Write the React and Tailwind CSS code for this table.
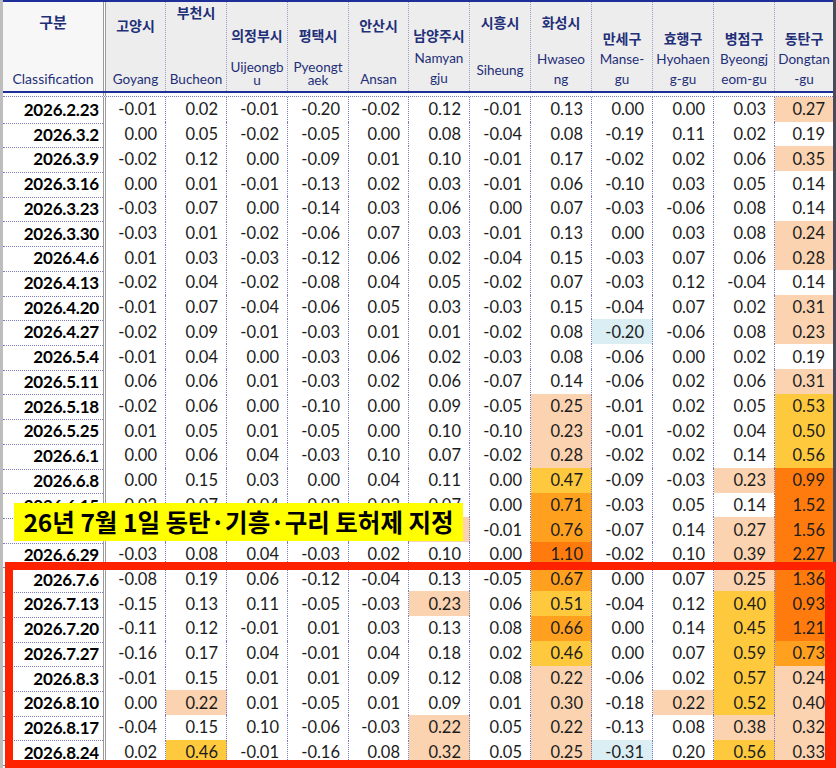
import React from 'react'

const grid = 'grid grid-cols-[100px_3px_60px_61px_61px_61px_60px_61px_61px_61px_61px_61px_61px_58px]'

const heads = [
  { ko: '고양시', en: ['Goyang'], k: 'mt-[14px]', e: ['mt-[37px]'], lead: 'leading-[16px]' },
  { ko: '부천시', en: ['Bucheon'], k: 'mt-[1px]', e: ['mt-[50px]'], lead: 'leading-[16px]' },
  { ko: '의정부시', en: ['Uijeongb', 'u'], k: 'mt-[24px]', e: ['mt-[17px]', 'mt-0'], lead: 'leading-[13px]' },
  { ko: '평택시', en: ['Pyeongt', 'aek'], k: 'mt-[24px]', e: ['mt-[17px]', 'mt-0'], lead: 'leading-[13px]' },
  { ko: '안산시', en: ['Ansan'], k: 'mt-[14px]', e: ['mt-[37px]'], lead: 'leading-[16px]' },
  { ko: '남양주시', en: ['Namyan', 'gju'], k: 'mt-[24px]', e: ['mt-[6px]', 'mt-[4px]'], lead: 'leading-[16px]' },
  { ko: '시흥시', en: ['Siheung'], k: 'mt-[11px]', e: ['mt-[31px]'], lead: 'leading-[16px]' },
  { ko: '화성시', en: ['Hwaseo', 'ng'], k: 'mt-[11px]', e: ['mt-[20px]', 'mt-[4px]'], lead: 'leading-[16px]' },
  { ko: '만세구', en: ['Manse-', 'gu'], k: 'mt-[27px]', e: ['mt-[4px]', 'mt-[4px]'], lead: 'leading-[16px]' },
  { ko: '효행구', en: ['Hyohaen', 'g-gu'], k: 'mt-[27px]', e: ['mt-[4px]', 'mt-[4px]'], lead: 'leading-[16px]' },
  { ko: '병점구', en: ['Byeongj', 'eom-gu'], k: 'mt-[27px]', e: ['mt-[4px]', 'mt-[4px]'], lead: 'leading-[16px]' },
  { ko: '동탄구', en: ['Dongtan', '-gu'], k: 'mt-[27px]', e: ['mt-[4px]', 'mt-[4px]'], lead: 'leading-[16px]' },
]

// ~p = forced peach, ~b = light blue
const rows = [
  ['2026.2.23', '-0.01 0.02 -0.01 -0.20 -0.02 0.12 -0.01 0.13 0.00 0.00 0.03 0.27'],
  ['2026.3.2', '0.00 0.05 -0.02 -0.05 0.00 0.08 -0.04 0.08 -0.19 0.11 0.02 0.19'],
  ['2026.3.9', '-0.02 0.12 0.00 -0.09 0.01 0.10 -0.01 0.17 -0.02 0.02 0.06 0.35'],
  ['2026.3.16', '0.00 0.01 -0.01 -0.13 0.02 0.03 -0.01 0.06 -0.10 0.03 0.05 0.14'],
  ['2026.3.23', '-0.03 0.07 0.00 -0.14 0.03 0.06 0.00 0.07 -0.03 -0.06 0.08 0.14'],
  ['2026.3.30', '-0.03 0.01 -0.02 -0.06 0.07 0.03 -0.01 0.13 0.00 0.03 0.08 0.24'],
  ['2026.4.6', '0.01 0.03 -0.03 -0.12 0.06 0.02 -0.04 0.15 -0.03 0.07 0.06 0.28'],
  ['2026.4.13', '-0.02 0.04 -0.02 -0.08 0.04 0.05 -0.02 0.07 -0.03 0.12 -0.04 0.14'],
  ['2026.4.20', '-0.01 0.07 -0.04 -0.06 0.05 0.03 -0.03 0.15 -0.04 0.07 0.02 0.31'],
  ['2026.4.27', '-0.02 0.09 -0.01 -0.03 0.01 0.01 -0.02 0.08 -0.20~b -0.06 0.08 0.23'],
  ['2026.5.4', '-0.01 0.04 0.00 -0.03 0.06 0.02 -0.03 0.08 -0.06 0.00 0.02 0.19'],
  ['2026.5.11', '0.06 0.06 0.01 -0.03 0.02 0.06 -0.07 0.14 -0.06 0.02 0.06 0.31'],
  ['2026.5.18', '-0.02 0.06 0.00 -0.10 0.00 0.09 -0.05 0.25 -0.01 0.02 0.05 0.53'],
  ['2026.5.25', '0.01 0.05 0.01 -0.05 0.00 0.10 -0.10 0.23 -0.01 -0.02 0.04 0.50'],
  ['2026.6.1', '0.00 0.06 0.04 -0.03 0.10 0.07 -0.02 0.28 -0.02 0.02 0.14 0.56'],
  ['2026.6.8', '0.00 0.15 0.03 0.00 0.04 0.11 0.00 0.47 -0.09 -0.03 0.23 0.99'],
  ['2026.6.15', '0.02 0.07 0.04 0.02 0.03 0.07 0.00 0.71 -0.03 0.05 0.14 1.52'],
  ['2026.6.22', '0.01 0.05 0.02 0.00 0.04 0.21 -0.01 0.76 -0.07 0.14 0.27 1.56'],
  ['2026.6.29', '-0.03 0.08 0.04 -0.03 0.02 0.10 0.00 1.10 -0.02 0.10 0.39 2.27'],
  ['2026.7.6', '-0.08 0.19 0.06 -0.12 -0.04 0.13 -0.05 0.67 0.00 0.07 0.25 1.36'],
  ['2026.7.13', '-0.15 0.13 0.11 -0.05 -0.03 0.23 0.06 0.51 -0.04 0.12 0.40 0.93'],
  ['2026.7.20', '-0.11 0.12 -0.01 0.01 0.03 0.13 0.08 0.66 0.00 0.14 0.45 1.21'],
  ['2026.7.27', '-0.16 0.17 0.04 -0.01 0.04 0.18 0.02 0.46 0.00 0.07 0.59 0.73'],
  ['2026.8.3', '-0.01 0.15 0.01 0.01 0.09 0.12 0.08 0.22 -0.06 0.02 0.57 0.24'],
  ['2026.8.10', '0.00 0.22 0.01 -0.05 0.01 0.09 0.01 0.30 -0.18 0.22 0.52 0.40~p'],
  ['2026.8.17', '-0.04 0.15 0.10 -0.06 -0.03 0.22 0.05 0.22 -0.13 0.08 0.38 0.32'],
  ['2026.8.24', '0.02 0.46 -0.01 -0.16 0.08 0.32 0.05 0.25 -0.31~b 0.20 0.56 0.33'],
]

const tone = (raw) => {
  const [s, flag] = raw.split('~')
  const v = parseFloat(s)
  if (flag === 'b') return 'bg-[#dbeef4]'
  if (flag === 'p') return 'bg-[#fbd3b1]'
  if (v >= 0.9) return 'bg-[#ff7b0d]'
  if (v >= 0.6) return 'bg-[#ffa01f]'
  if (v >= 0.4) return 'bg-[#ffc93d]'
  if (v > 0.205) return 'bg-[#fbd3b1]'
  return 'bg-white'
}

const Header = () => (
  <div className={grid + ' h-[93px] border-y-2 border-[#1f2f9a]'}>
    <div className='flex flex-col items-center bg-[#f7f7f7] text-[#1f2f78]'>
      <div className='mt-[11px] leading-[18px] text-[15px] font-bold font-["Noto_Sans_CJK_KR",sans-serif]'>구분</div>
      <div className='mt-[40px] leading-[16px] text-[14px]'>Classification</div>
    </div>
    <div className='border-x border-[#9a9a9a] bg-white'></div>
    {heads.map((h, i) => (
      <div key={h.ko} className={'flex flex-col items-center bg-[#ededed] text-[#1f2f78] border-dotted border-[#9c9cc8] ' + (i < heads.length - 1 ? 'border-r' : '')}>
        <div className={h.k + ' leading-[18px] text-[14px] font-bold font-["Noto_Sans_CJK_KR",sans-serif] whitespace-nowrap'}>{h.ko}</div>
        {h.en.map((t, j) => (
          <div key={t} className={h.e[j] + ' ' + h.lead + ' text-[13.5px] whitespace-nowrap'}>{t}</div>
        ))}
      </div>
    ))}
  </div>
)

const Row = ({ date, vals }) => {
  const list = vals.split(' ')
  return (
    <div className={grid + ' h-[24.72px]'}>
      <div className='flex items-center justify-end pr-[4px] border-b border-dotted border-[#7b7bc0] font-bold text-[17px] tracking-[-0.2px] text-black'>{date}</div>
      <div className='border-x border-[#9a9a9a] bg-white'></div>
      {list.map((raw, i) => (
        <div key={i} className={'flex items-center justify-end pr-[8px] border-b border-dotted border-[#7b7bc0] text-[16.5px] text-[#1c1c1c] ' + tone(raw) + (i < list.length - 1 ? ' border-r' : '')}>
          {raw.split('~')[0]}
        </div>
      ))}
    </div>
  )
}

export default function App() {
  return (
    <div className='relative w-[836px] h-[768px] overflow-hidden bg-white font-["Lato","Liberation_Sans",sans-serif]'>
      <div className='flex h-full'>
        <div className='w-[3px] bg-[#bdbdbd]'></div>
        <div className='w-[830px] flex flex-col'>
          <Header />
          <div className={grid + ' h-[4px] border-b border-dotted border-[#7b7bc0]'}>
            <div></div>
            <div className='border-x border-[#9a9a9a]'></div>
          </div>
          {rows.map(([d, v]) => <Row key={d} date={d} vals={v} />)}
        </div>
        <div className='w-[3px] bg-[#4a4a5a]'></div>
      </div>

      <div className='absolute left-[14px] top-[503px] w-[449px] h-[38px] bg-[#ffff00] flex items-center justify-center text-[24.5px] font-bold text-black leading-none font-["Noto_Sans_CJK_KR",sans-serif] whitespace-nowrap'>
        26년 7월 1일 동탄·기흥·구리 토허제 지정
      </div>

      <div className='absolute left-[5px] top-[562px] w-[831px] h-[206px] border-[8px] border-r-[11px] border-[#ff2200]'></div>
    </div>
  )
}
